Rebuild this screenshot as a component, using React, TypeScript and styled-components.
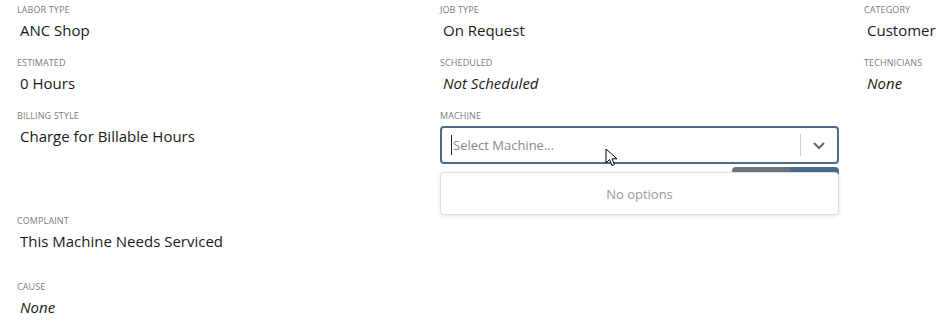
import styled, { createGlobalStyle } from "styled-components";

const GlobalStyle = createGlobalStyle`
  html, body {
    margin: 0;
    padding: 0;
    background: #ffffff;
  }
  body {
    font-family: "Open Sans", "Noto Sans", sans-serif;
    color: #212529;
    overflow: hidden;
  }
`;

const Page = styled.div`
  width: 937px;
  height: 332px;
  overflow: hidden;
  padding: 4px 0 0 17px;
  box-sizing: border-box;
`;

const Grid = styled.div`
  display: grid;
  grid-template-columns: 423px 424px 200px;
  row-gap: 16px;
`;

const FullRow = styled.div<{ $gap?: number }>`
  grid-column: 1 / -1;
  margin-top: ${(p) => p.$gap ?? 0}px;
`;

const Field = styled.div`
  display: flex;
  flex-direction: column;
`;

const Label = styled.div`
  font-size: 9px;
  line-height: 12px;
  text-transform: uppercase;
  color: #7a7a7a;
  letter-spacing: 0.1px;
`;

const Value = styled.div<{ $italic?: boolean }>`
  margin-top: 3px;
  padding-left: 3px;
  font-size: 15px;
  line-height: 22px;
  font-style: ${(p) => (p.$italic ? "italic" : "normal")};
  color: #1a1a1a;
  white-space: nowrap;
`;

const SelectWrap = styled.div`
  position: relative;
  margin-top: 4px;
  width: 399px;
`;

const Control = styled.div`
  display: flex;
  align-items: center;
  height: 38px;
  box-sizing: border-box;
  border: 2px solid #4b6b8c;
  border-radius: 4px;
  background: #fff;
`;

const InputArea = styled.div`
  flex: 1;
  display: flex;
  align-items: center;
  padding-left: 9px;
  font-size: 13px;
  color: #8a8a8a;
`;

const Caret = styled.span`
  display: inline-block;
  width: 1px;
  height: 20px;
  background: #222;
  margin-right: 1px;
`;

const Separator = styled.span`
  width: 1px;
  height: 22px;
  background: #cccccc;
`;

const Indicator = styled.div`
  width: 36px;
  display: flex;
  align-items: center;
  justify-content: center;
  color: #666;
`;

const Menu = styled.div`
  position: absolute;
  top: 46px;
  left: 0;
  right: 0;
  height: 43px;
  box-sizing: border-box;
  border: 1px solid #dedede;
  border-radius: 4px;
  background: #fff;
  box-shadow: 0 1px 4px rgba(0, 0, 0, 0.12);
  display: flex;
  align-items: center;
  justify-content: center;
  font-size: 13px;
  color: #999;
  z-index: 2;
`;

const Pointer = styled.svg`
  position: absolute;
  left: 165px;
  top: 22px;
  z-index: 3;
`;

const ButtonRow = styled.div`
  display: flex;
  justify-content: flex-end;
  margin-top: 3px;
  width: 399px;
`;

const ActionButton = styled.div<{ $variant: "secondary" | "primary"; $w: number }>`
  width: ${(p) => p.$w}px;
  height: 32px;
  background: ${(p) => (p.$variant === "primary" ? "#4a6c8f" : "#6c757d")};
  border-radius: ${(p) => (p.$variant === "primary" ? "0 4px 4px 0" : "4px 0 0 4px")};
`;

const Chevron = () => (
  <svg width="14" height="14" viewBox="0 0 14 14">
    <path d="M2 5 L7 10 L12 5" fill="none" stroke="currentColor" strokeWidth="2" />
  </svg>
);

const App = () => {
  return (
    <>
      <GlobalStyle />
      <Page>
        <Grid>
          <Field>
            <Label>Labor Type</Label>
            <Value>ANC Shop</Value>
          </Field>
          <Field>
            <Label>Job Type</Label>
            <Value>On Request</Value>
          </Field>
          <Field>
            <Label>Category</Label>
            <Value>Customer</Value>
          </Field>

          <Field>
            <Label>Estimated</Label>
            <Value>0 Hours</Value>
          </Field>
          <Field>
            <Label>Scheduled</Label>
            <Value $italic>Not Scheduled</Value>
          </Field>
          <Field>
            <Label>Technicians</Label>
            <Value $italic>None</Value>
          </Field>

          <Field>
            <Label>Billing Style</Label>
            <Value>Charge for Billable Hours</Value>
          </Field>
          <Field>
            <Label>Machine</Label>
            <SelectWrap>
              <Control>
                <InputArea>
                  <Caret />
                  Select Machine...
                </InputArea>
                <Separator />
                <Indicator>
                  <Chevron />
                </Indicator>
              </Control>
              <Pointer width="13" height="20" viewBox="0 0 13 20">
                <path
                  d="M1 1 L1 15 L4.5 11.5 L7 17.5 L9.5 16.5 L7 10.8 L12 10.8 Z"
                  fill="#fff"
                  stroke="#000"
                  strokeWidth="1"
                  strokeLinejoin="round"
                />
              </Pointer>
              <Menu>No options</Menu>
            </SelectWrap>
            <ButtonRow>
              <ActionButton $variant="secondary" $w={58} />
              <ActionButton $variant="primary" $w={49} />
            </ButtonRow>
          </Field>
          <div />

          <FullRow $gap={0}>
            <Field>
              <Label>Complaint</Label>
              <Value>This Machine Needs Serviced</Value>
            </Field>
          </FullRow>
          <FullRow $gap={13}>
            <Field>
              <Label>Cause</Label>
              <Value $italic>None</Value>
            </Field>
          </FullRow>
        </Grid>
      </Page>
    </>
  );
};

export default App;
